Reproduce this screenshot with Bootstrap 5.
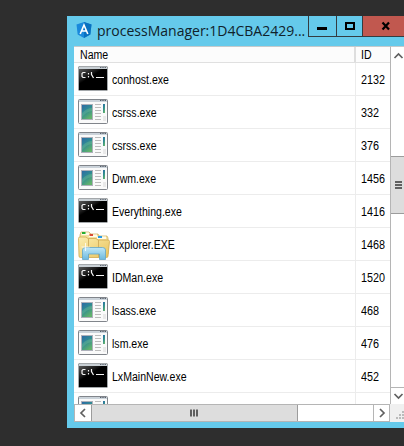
<!DOCTYPE html>
<html lang="en">
<head>
<meta charset="utf-8">
<title>processManager</title>
<link href="https://cdn.jsdelivr.net/npm/bootstrap@5.3.0/dist/css/bootstrap.min.css" rel="stylesheet">
<style>
html,body{width:404px;height:446px;overflow:hidden}
body{background:#2e2e2e;padding:16px 0 0 67px;font-family:"Liberation Sans",Arial,sans-serif;color:#000}
.win{width:337px;height:412px;background:#65caeb;padding-left:7px}
.titlebar{height:30px}
.applogo{margin:4px 0 0 2px;width:16px;height:20px}
.caption{font:15px/28px "Open Sans","Noto Sans",sans-serif;margin-left:5px;width:211px;white-space:nowrap;color:#10222b}
.caption span{display:inline-block;transform:scaleX(.934);transform-origin:0 50%}
.wbtn{height:21px;border-left:1px solid #343c40;border-bottom:1px solid #343c40}
.wmin{width:28px}.wmax{width:26px}.wclose{width:42px;background:#c1584f}
.pane{height:358px;background:#fff}
.view{width:316px;height:358px}
.head{height:17px;border-top:1px solid #c4cacc;border-bottom:1px solid #e0e0e0;background:#fcfcfc;font-size:12px;line-height:17px}
.cell-name{width:282px;border-right:1px solid #ececec}
.head .cell-name{padding-left:6px;border-right:2px solid #dedede}
.cell-id{padding-left:5px}
.rows{height:341px}
.proc{height:33px;border-bottom:1px solid #ececec;font-size:12px;line-height:34px;flex:none}
.proc svg{margin:3px 2px 0 3px;flex:none}
.squeeze{display:inline-block;transform:scaleX(.88);transform-origin:0 50%;white-space:nowrap}
.proc .cell-id .squeeze{transform:scaleX(.9)}
.vbar{width:14px;height:358px;border-left:1px solid #b5b5b5;border-top:1px solid #c4cacc}
.vbtn{height:16px}
.vthumb{height:58px;background:#ddd;border-top:1px solid #9c9c9c;border-bottom:1px solid #9c9c9c;margin-top:93px;padding-top:1px}
.vdown{margin-top:173px;border-top:1px solid #b5b5b5}
.hbar{height:18px}
.htrack{width:316px;border-top:1px solid #b5b5b5;border-bottom:1px solid #b5b5b5;border-left:1px solid #b5b5b5}
.hbtn{width:16px}
.hthumb{width:207px;background:#ddd;border-left:1px solid #9c9c9c;border-right:1px solid #9c9c9c}
.hright{width:17px;border-left:1px solid #b5b5b5;border-right:1px solid #b5b5b5}
.corner{width:14px;background:#f0f0f0}
svg{display:block}
</style>
<script src="https://cdn.jsdelivr.net/npm/bootstrap@5.3.0/dist/js/bootstrap.bundle.min.js"></script>
</head>
<body>
<svg width="0" height="0" class="position-absolute">
<defs>
<linearGradient id="gloss" x1="0" y1="0" x2="1" y2="1"><stop offset="0" stop-color="#777"/><stop offset=".35" stop-color="#222"/><stop offset=".45" stop-color="#000"/></linearGradient>
<linearGradient id="shot" x1="0" y1="0" x2=".6" y2="1"><stop offset="0" stop-color="#2c66a8"/><stop offset=".5" stop-color="#2f8c93"/><stop offset="1" stop-color="#63b36b"/></linearGradient>
<linearGradient id="fold" x1="0" y1="0" x2="1" y2="1"><stop offset="0" stop-color="#fbeeb0"/><stop offset="1" stop-color="#e8c35c"/></linearGradient>
<linearGradient id="glass" x1="0" y1="0" x2="0" y2="1"><stop offset="0" stop-color="#bfe8f8"/><stop offset="1" stop-color="#6db9de"/></linearGradient>
<symbol id="cmd" viewBox="0 0 33 28">
<rect x="1.5" y=".5" width="29" height="24" rx="1" fill="#000" stroke="#a4a8ab"/>
<rect x="2" y="1" width="28" height="2" fill="#c9d0d5"/>
<path d="M23 1.5h1.4M25.3 1.5h1.4M27.6 1.5H29" stroke="#626a75"/>
<path d="M2 3h27L2 20z" fill="url(#gloss)" opacity=".75"/>
<path d="M8.500 6.500H6L5 7.500v3L6 11.500h2.500M11.500 7v1.500M11.500 10v1.500M14.500 6v2.500l2 3.500M19 11.500h8" fill="none" stroke="#f4f4f4" stroke-width="1.200"/>
</symbol>
<symbol id="app" viewBox="0 0 33 28">
<rect x="1.500" y=".5" width="29" height="24" rx="1" fill="#fafafa" stroke="#81858b"/>
<rect x="2" y="1" width="28" height="2" fill="#cbd3da"/>
<path d="M23 1.500h1.400M25.300 1.500h1.400M27.600 1.500H29" stroke="#59616c"/>
<rect x="4.500" y="5.500" width="11" height="15" fill="url(#shot)" stroke="#adb0ba"/>
<path d="M5 14q5-5 10-5v3q-5 0-10 6z" fill="#87c997" opacity=".3"/>
<path d="M18 5.500h6M18 8.500h6M18 11.500h6M18 14.500h6M18 17.500h6M18 20.500h6" stroke="#bcbcbc"/>
<rect x="26" y="5" width="2" height="9" fill="url(#shot)"/>
<rect x="26" y="17" width="3" height="5" fill="#e9e9e9"/>
</symbol>
<symbol id="folder" viewBox="0 0 33 31">
<path d="M3 4l1-3h8l2 2h7l1 2h8l1 2v16H3z" fill="#f3e2a0" stroke="#c9a957" stroke-width=".7"/>
<path d="M4.500 1.500H12v2.500H4.500zM12 3.500h8V6h-8zM20 5.500h9V8h-9z" fill="#fffbea"/>
<path d="M5 2h3.500" stroke="#24ae31" stroke-width="2"/><path d="M12.500 4H16" stroke="#da4b36" stroke-width="2"/><path d="M21 6h4" stroke="#249be6" stroke-width="2"/>
<path d="M1.500 7.500Q1.500 6 3 6h6l2 1.500h8L21 9h10q1.500 0 1.500 1.500L31 25q0 1.500-1.500 1.500h-26Q2 26.500 2 25z" fill="url(#fold)" stroke="#d0a94f" stroke-width=".8"/>
<path d="M11.500 8v18M21.500 9v17" stroke="#cfac5a" stroke-width=".9"/>
<path d="M5.500 28.500V19q0-2.500 3-2.500h17q3 0 3 2.500v9.500h-6V23h-11v5.500z" fill="url(#glass)" stroke="#62a6c8" stroke-width=".8"/>
<path d="M8.500 12v8M4.500 16h8" stroke="#fff" stroke-width="1" opacity=".8"/>
</symbol>
</defs>
</svg>
<main class="win">
<header class="titlebar d-flex align-items-start">
<svg class="applogo" viewBox="0 0 16 20"><path d="M8 2l7.500 2.500-1.200 10L8 18l-6.300-3.500-1.200-10z" fill="#1989dc"/><path d="M8 2l7.500 2.500-1.200 10L8 18z" fill="#0871c0"/><path d="M4.200 14L8 5l3.800 9M5.700 11h4.600" stroke="#fff" stroke-width="1.600" fill="none"/></svg>
<div class="caption"><span>processManager:1D4CBA2429...</span></div>
<div class="wbtn wmin ms-auto flex-shrink-0"><svg width="27" height="20"><path d="M8 12.500h10" stroke="#000" stroke-width="3"/></svg></div>
<div class="wbtn wmax flex-shrink-0"><svg width="25" height="20"><path d="M9 7h8v6H9z" fill="none" stroke="#000" stroke-width="2"/></svg></div>
<div class="wbtn wclose flex-shrink-0"><svg width="41" height="20"><path d="M19.500 6.500l6.500 7M26 6.500l-6.500 7" stroke="#000" stroke-width="2.200"/></svg></div>
</header>
<section class="d-flex pane">
<div class="view d-flex flex-column overflow-hidden">
<div class="head d-flex flex-shrink-0"><div class="cell-name"><span class="squeeze">Name</span></div><div class="cell-id"><span class="squeeze">ID</span></div></div>
<div class="rows overflow-hidden" id="rows"></div>
</div>
<div class="vbar flex-shrink-0 overflow-hidden">
<div class="vbtn"><svg width="14" height="16"><path d="M3.500 11L7.500 7l4 4" fill="none" stroke="#606060" stroke-width="1.700"/></svg></div>
<div class="vthumb"><svg width="14" height="40"><path d="M4 24h7M4 27h7M4 30h7" stroke="#606060" stroke-width="2"/></svg></div>
<div class="vdown"><svg width="14" height="16"><path d="M3.500 6L7.500 10l4-4" fill="none" stroke="#606060" stroke-width="1.700"/></svg></div>
</div>
</section>
<div class="hbar d-flex bg-white">
<div class="htrack d-flex flex-shrink-0">
<div class="hbtn"><svg width="16" height="16"><path d="M10 4L6 8l4 4" fill="none" stroke="#606060" stroke-width="1.700"/></svg></div>
<div class="hthumb"><svg width="205" height="16"><path d="M99 4.500v7M102 4.500v7M105 4.500v7" stroke="#606060" stroke-width="2"/></svg></div>
<div class="hright ms-auto"><svg width="15" height="16"><path d="M6 4l4 4-4 4" fill="none" stroke="#606060" stroke-width="1.700"/></svg></div>
</div>
<div class="corner"><svg width="14" height="18"><path d="M12 7h2v2h-2zM9 10h2v2H9zM12 10h2v2h-2zM6 13h2v2H6zM9 13h2v2H9zM12 13h2v2h-2z" fill="#bbb"/></svg></div>
</div>
</main>
<script>
const processes=[["cmd","conhost.exe",2132],["app","csrss.exe",332],["app","csrss.exe",376],["app","Dwm.exe",1456],["cmd","Everything.exe",1416],["folder","Explorer.EXE",1468],["cmd","IDMan.exe",1520],["app","lsass.exe",468],["app","lsm.exe",476],["cmd","LxMainNew.exe",452],["app","",""]];
document.getElementById("rows").innerHTML=processes.map(([icon,name,id])=>`<div class="proc d-flex"><div class="cell-name d-flex"><svg width="33" height="${icon==="folder"?31:28}"><use href="#${icon}"/></svg><span class="squeeze">${name}</span></div><div class="cell-id"><span class="squeeze">${id}</span></div></div>`).join("");
</script>
</body>
</html>
